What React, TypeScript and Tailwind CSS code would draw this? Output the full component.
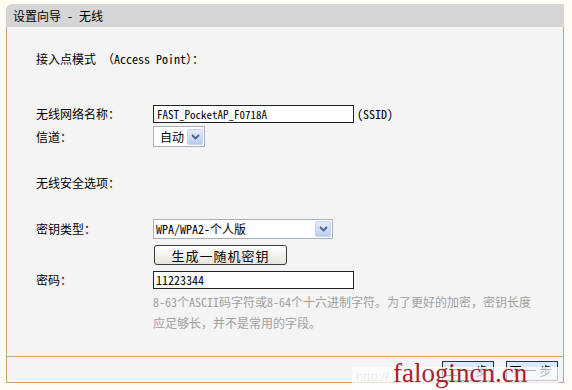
import React from 'react'

const Chevron = () => (
  <svg width="9" height="6" viewBox="0 0 9 6">
    <path d="M1 1l3.5 3.5L8 1" fill="none" stroke="#4d6185" strokeWidth="1.8" />
  </svg>
)

function SelectBox({ value, width }: { value: React.ReactNode; width: string }) {
  return (
    <div className={`${width} h-full bg-white border border-[#a7b0bc] flex items-center justify-between pl-[2px] pr-[1px]`}>
      <span className="whitespace-nowrap">{value}</span>
      <span className="w-[16px] h-[16px] rounded-[2px] border border-[#c3d3f0] bg-gradient-to-b from-[#e4ecfb] to-[#b9cdf2] flex items-center justify-center">
        <Chevron />
      </span>
    </div>
  )
}

export default function App() {
  return (
    <div className="w-[572px] h-[390px] relative overflow-hidden bg-[#fffcf3] pt-[4px] pl-[6px] text-[12px] text-black font-[family-name:'Noto_Sans_Mono_CJK_SC','Noto_Sans_CJK_SC',monospace]">
      <div className="w-[558px]">
        {/* title bar */}
        <div className="h-[23px] bg-[#d5d5d5] rounded-tl-[6px] pl-[7px] flex items-center leading-none">
          设置向导 - 无线
        </div>

        {/* form panel */}
        <div className="h-[330px] bg-[#f4f4f4] border-x border-b border-[#caa26e] pl-[29px] pt-[24px] leading-[16px]">
          <div className="h-[16px]">接入点模式 （Access Point）：</div>

          <div className="mt-[38px] h-[18px] flex items-center">
            <span className="w-[117px]">无线网络名称：</span>
            <div className="w-[201px] h-full bg-white border border-[#222] pl-[3px] flex items-center text-[11px]">
              FAST_PocketAP_F0718A
            </div>
            <span className="ml-[3px]">(SSID)</span>
          </div>

          <div className="mt-[3px] h-[21px] flex items-center">
            <span className="w-[117px]">信道：</span>
            <SelectBox width="w-[52px]" value={<span className="pl-[4px]">自动</span>} />
          </div>

          <div className="mt-[28px] h-[16px]">无线安全选项：</div>

          <div className="mt-[28px] h-[20px] flex items-center">
            <span className="w-[117px]">密钥类型：</span>
            <SelectBox width="w-[180px]" value="WPA/WPA2-个人版" />
          </div>

          <div className="mt-[6px] h-[20px] flex">
            <span className="w-[118px]" />
            <button className="w-[133px] h-full rounded-[3px] border border-[#3a3a3a] bg-gradient-to-b from-white to-[#e6e4dc] text-[13px] tracking-[1px] leading-none">
              生成一随机密钥
            </button>
          </div>

          <div className="mt-[6px] h-[18px] flex items-center">
            <span className="w-[117px]">密码：</span>
            <div className="w-[201px] h-full bg-white border border-[#222] pl-[2px] flex items-center">
              11223344
            </div>
          </div>

          <div className="mt-[2px] pl-[117px] text-[#a0a0a0] leading-[21px]">
            <div>8-63个ASCII码字符或8-64个十六进制字符。为了更好的加密，密钥长度</div>
            <div>应足够长，并不是常用的字段。</div>
          </div>
        </div>

        {/* footer with navigation buttons */}
        <div className="h-[26px] bg-[#f4f4f4] border-x border-b border-[#caa26e] flex justify-end items-start pt-[4px] pr-[5px] gap-[12px]">
          <button className="w-[52px] h-[20px] border border-[#1f3550] bg-[#dce8f6] tracking-[3px] leading-none">上一步</button>
          <button className="w-[52px] h-[20px] border border-[#1f3550] bg-[#dce8f6] tracking-[3px] leading-none">下一步</button>
        </div>
      </div>

      {/* watermark */}
      <div className="absolute left-[352px] top-[367px] w-[207px] h-[23px] bg-white/70" />
      <div className="absolute left-[356px] top-[370px] text-[13px] text-[#ececec] font-[family-name:'Liberation_Sans',sans-serif] leading-none">http://</div>
      <div className="absolute left-[393px] top-[360px] text-[27px] leading-none text-[#a8232b] font-[family-name:'Liberation_Serif',serif]">
        falogincn.cn
      </div>
    </div>
  )
}
